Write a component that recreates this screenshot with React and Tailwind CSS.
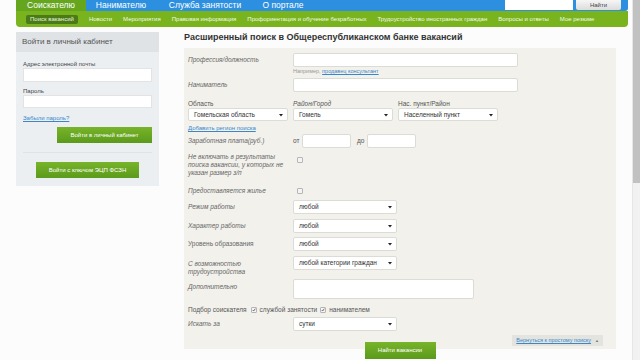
import React from "react";

const font = { fontFamily: '"Liberation Sans", Arial, sans-serif' };

const Select = ({ value, className = "" }) => (
  <div className={`flex items-center justify-between bg-white border border-[#dcdcd6] rounded-[2px] pl-[5px] pr-[4px] text-[6.5px] text-[#333] ${className}`}>
    <span>{value}</span>
    <svg width="4" height="4" viewBox="0 0 4 4">
      <path d="M0 1 L4 1 L2 3.6 Z" fill="#222" />
    </svg>
  </div>
);

const Input = ({ className = "" }) => (
  <div className={`bg-white border border-[#dcdcd6] rounded-[2px] ${className}`} />
);

const Checkbox = ({ checked }) => (
  <div className="w-[6px] h-[6px] border border-[#b5b5b5] bg-[#f4f4f4] rounded-[1px] flex items-center justify-center">
    {checked && (
      <svg width="6" height="6" viewBox="0 0 6 6">
        <path d="M1 3 L2.5 4.5 L5 1" stroke="#333" strokeWidth="1" fill="none" />
      </svg>
    )}
  </div>
);

const Label = ({ children, italic = true }) => (
  <div className={`w-[105px] shrink-0 text-[6.5px] leading-[8px] text-[#666] ${italic ? "italic" : ""}`}>
    {children}
  </div>
);

const navItems = [
  "Новости",
  "Мероприятия",
  "Правовая информация",
  "Профориентация и обучение безработных",
  "Трудоустройство иностранных граждан",
  "Вопросы и ответы",
  "Мое резюме",
];

const App = () => {
  return (
    <div className="w-[640px] h-[360px] overflow-hidden flex bg-[#fcfcfc]" style={font}>
      <div className="w-[632px] flex flex-col">
        {/* top tabs */}
        <div className="ml-[16px] mr-[4px] h-[11px] flex">
          <div className="w-[70px] bg-[#66a61f] text-white text-[8.5px] leading-[11px] text-center">Соискателю</div>
          <div className="flex-1 flex bg-[#2d8fe0] rounded-br-[3px] text-white text-[8.5px] leading-[11px]">
            <div className="w-[70px] text-center">Нанимателю</div>
            <div className="w-[98px] text-center">Служба занятости</div>
            <div className="w-[58px] text-center">О портале</div>
            <div className="ml-auto flex items-start gap-[3px] pr-[7px]">
              <div className="w-[68px] h-[10px] bg-white" />
              <div className="w-[45px] h-[10px] bg-gradient-to-b from-[#f6f6f6] to-[#dcdcdc] text-[#444] text-[6px] leading-[10px] text-center rounded-b-[2px]">Найти</div>
            </div>
          </div>
        </div>
        {/* green nav */}
        <div className="ml-[16px] mr-[4px] h-[16px] bg-[#79b41e] rounded-b-[4px] flex items-center pl-[10px] gap-[11px] text-white text-[6px]">
          <div className="bg-[#4b7a18] px-[4px] h-[9px] leading-[9px] rounded-[2px] text-[#e8f2dc]">Поиск вакансий</div>
          {navItems.map((item) => (
            <div key={item} className="text-[#f2f8e8]">{item}</div>
          ))}
        </div>

        <div className="flex mt-[5px]">
          {/* login panel */}
          <div className="ml-[16px] w-[143px] h-[154px] flex flex-col bg-[#ebeff2]">
            <div className="h-[20px] bg-[#dfe3e6] pl-[6px] text-[8px] leading-[20px] text-[#555]">Войти в личный кабинет</div>
            <div className="px-[7px] flex flex-col">
              <div className="mt-[8px] text-[6px] leading-[8px] text-[#444]">Адрес электронной почты</div>
              <div className="h-[14px] bg-white border border-[#e3e3e3]" />
              <div className="mt-[5px] text-[6px] leading-[8px] text-[#444]">Пароль</div>
              <div className="h-[13px] bg-white border border-[#e3e3e3]" />
              <div className="mt-[7px] text-[6px] leading-[7px] text-[#3a86c8] underline">Забыли пароль?</div>
              <div className="self-end mt-[5px] w-[95px] h-[16px] bg-gradient-to-b from-[#78b42a] to-[#5b9a1b] text-white text-[6px] leading-[16px] text-center">Войти в личный кабинет</div>
              <div className="mt-[9px] h-px bg-[#dfe3e6]" />
              <div className="self-center mt-[9px] w-[103px] h-[16px] bg-gradient-to-b from-[#78b42a] to-[#5b9a1b] text-white text-[6px] leading-[16px] text-center">Войти с ключом ЭЦП ФСЗН</div>
            </div>
          </div>

          {/* main */}
          <div className="ml-[25px] w-[432px] flex flex-col">
            <div className="h-[11px] text-[9px] leading-[11px] font-bold text-[#333]">Расширенный поиск в Общереспубликанском банке вакансий</div>
            <div className="mt-[5px] bg-[#f2f1ec] pl-[4px] pt-[5px] pb-[3px] flex flex-col">
              <div className="flex items-center h-[14px]">
                <Label>Профессия/должность</Label>
                <Input className="w-[225px] h-[14px]" />
              </div>
              <div className="flex h-[7px] mt-[1px]">
                <div className="w-[105px]" />
                <div className="text-[5.5px] leading-[7px] text-[#999]">
                  Например, <span className="text-[#3a86c8] underline">продавец консультант</span>
                </div>
              </div>
              <div className="flex items-center h-[14px] mt-[3px]">
                <Label>Наниматель</Label>
                <Input className="w-[225px] h-[14px]" />
              </div>
              <div className="flex gap-[5px] mt-[8px] h-[7px] text-[6.5px] leading-[7px] text-[#555]">
                <div className="w-[100px]">Область</div>
                <div className="w-[100px] italic">Район/Город</div>
                <div className="w-[100px]">Нас. пункт/Район</div>
              </div>
              <div className="flex gap-[5px] mt-[1px]">
                <Select value="Гомельская область" className="w-[100px] h-[13px]" />
                <Select value="Гомель" className="w-[100px] h-[13px]" />
                <Select value="Населенный пункт" className="w-[100px] h-[13px]" />
              </div>
              <div className="mt-[4px] h-[7px] text-[6px] leading-[7px] text-[#3a86c8] underline">Добавить регион поиска</div>
              <div className="flex items-center h-[14px] mt-[2px] text-[6.5px] text-[#555]">
                <Label>Заработная плата(руб.)</Label>
                <span className="w-[9px]">от</span>
                <Input className="w-[49px] h-[14px]" />
                <span className="ml-[6px] w-[10px]">до</span>
                <Input className="w-[49px] h-[14px]" />
              </div>
              <div className="flex mt-[5px]">
                <Label>
                  Не включать в результаты<br />поиска вакансии, у которых не<br />указан размер з/п
                </Label>
                <div className="ml-[4px] mt-[4px]">
                  <Checkbox />
                </div>
              </div>
              <div className="flex items-center h-[7px] mt-[10px]">
                <Label>Предоставляется жилье</Label>
                <div className="ml-[4px]">
                  <Checkbox />
                </div>
              </div>
              <div className="flex items-center h-[14px] mt-[6px]">
                <Label>Режим работы</Label>
                <Select value="любой" className="w-[104px] h-[14px]" />
              </div>
              <div className="flex items-center h-[14px] mt-[5px]">
                <Label>Характер работы</Label>
                <Select value="любой" className="w-[104px] h-[14px]" />
              </div>
              <div className="flex items-center h-[14px] mt-[4px]">
                <Label italic={false}>Уровень образования</Label>
                <Select value="любой" className="w-[104px] h-[14px]" />
              </div>
              <div className="flex h-[14px] mt-[5px]">
                <div className="pt-[4px]">
                  <Label>
                    С возможностью<br />трудоустройства
                  </Label>
                </div>
                <Select value="любой категории граждан" className="w-[104px] h-[14px]" />
              </div>
              <div className="flex mt-[9px]">
                <div className="pt-[4px]">
                  <Label>Дополнительно</Label>
                </div>
                <div className="w-[181px] h-[20px] bg-white border border-[#dcdcd6] rounded-[2px]" />
              </div>
              <div className="flex items-center h-[8px] mt-[7px] gap-[3px] whitespace-nowrap text-[6.5px] text-[#555]">
                <span className="mr-[1px]">Подбор соискателя</span>
                <Checkbox checked />
                <span>службой занятости</span>
                <Checkbox checked />
                <span>нанимателем</span>
              </div>
              <div className="flex items-center h-[14px] mt-[3px]">
                <Label>Искать за</Label>
                <Select value="сутки" className="w-[104px] h-[14px]" />
              </div>
              <div className="self-end mr-[13px] mt-[4px] h-[11px] px-[4px] bg-[#e3e4df] flex items-center gap-[4px] text-[5.5px]">
                <span className="text-[#3a86c8] underline">Вернуться к простому поиску</span>
                <span className="text-[#777] text-[4px]">▲</span>
              </div>
            </div>
            <div className="self-center -mt-[7px] w-[71px] h-[17px] bg-gradient-to-b from-[#78b42a] to-[#5b9a1b] text-white text-[6px] leading-[17px] text-center">Найти вакансии</div>
          </div>
        </div>
      </div>
      {/* scrollbar */}
      <div className="w-[8px] flex flex-col bg-[#f1f1f1] border-l border-[#e6e6e6]">
        <div className="h-[183px] bg-[#c1c1c1]" />
      </div>
    </div>
  );
};

export default App;
